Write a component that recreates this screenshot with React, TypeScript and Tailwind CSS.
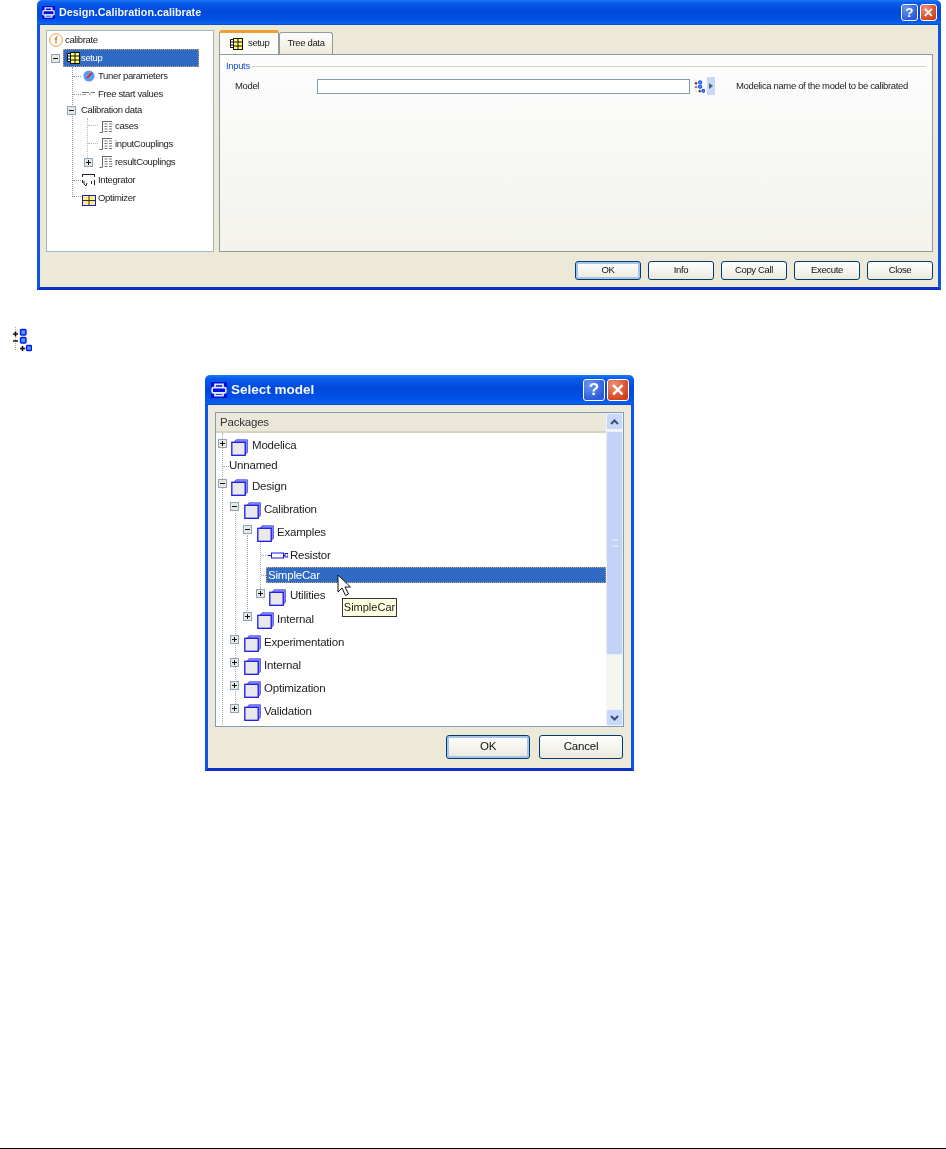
import type { ReactNode } from "react";

const FONT = "[font-family:'Liberation_Sans',Arial,sans-serif]";
const SMALL_TEXT = "text-[9.5px] tracking-[-0.35px]";
const LIST_TEXT = "text-[11.5px] tracking-[-0.2px]";

function ExpandBox({ open, className = "" }: { open?: boolean; className?: string }) {
  return (
    <svg width="9" height="9" viewBox="0 0 9 9" className={`shrink-0 ${className}`}>
      <rect x="0.5" y="0.5" width="8" height="8" fill="#e8e8e0" stroke="#8fa4b8" />
      <rect x="2" y="4" width="5" height="1" fill="#111" />
      {!open && <rect x="4" y="2" width="1" height="5" fill="#111" />}
    </svg>
  );
}

function FuncIcon() {
  return (
    <svg width="14" height="14" viewBox="0 0 14 14" className="shrink-0">
      <circle cx="7" cy="7" r="6.3" fill="#fff" stroke="#f09a3c" />
      <path d="M8.6 3.6C7.4 3.2 7 4 7 5v5.5M5.4 6h3" fill="none" stroke="#c46a10" strokeWidth="1" />
    </svg>
  );
}

function TableIcon() {
  return (
    <svg width="13" height="14" viewBox="0 0 13 14" className="shrink-0">
      <path d="M3.5 2.5H.5v8h3M.5 5h3M.5 8h3" fill="#fff" stroke="#111" strokeWidth="1" />
      <rect x="3.5" y="1.5" width="9" height="11" fill="#ffff70" stroke="#111" />
      <path d="M8 1.5v11M3.5 5h9M3.5 9h9" stroke="#111" strokeWidth="1" />
    </svg>
  );
}

function TunerIcon() {
  return (
    <svg width="12" height="12" viewBox="0 0 12 12" className="shrink-0">
      <circle cx="6" cy="6" r="5.6" fill="#5f9be8" />
      <path d="M4 8 9 3" stroke="#e01818" strokeWidth="1.6" />
    </svg>
  );
}

function FreeStartIcon() {
  return (
    <svg width="13" height="6" viewBox="0 0 13 6" className="shrink-0">
      <path d="M0 1.5h7M9 1.5h4" stroke="#777" strokeWidth="1" />
      <path d="M0 3.5h4M7 3.5h1V1.5" fill="none" stroke="#999" strokeWidth="1" />
    </svg>
  );
}

function CouplingIcon() {
  return (
    <svg width="13" height="14" viewBox="0 0 13 14" className="shrink-0">
      <path d="M3.5 1v11M.5 12.5h3M3 1.5h10" stroke="#666" strokeWidth="1" fill="none" />
      <path d="M5.5 4h3M10 4h3M5.5 6.5h3M10 6.5h3M5.5 9h3M10 9h3M5.5 11.5h3M10 11.5h3" stroke="#777" strokeWidth="1" />
    </svg>
  );
}

function IntegratorIcon() {
  return (
    <svg width="13" height="14" viewBox="0 0 13 14" className="shrink-0">
      <path d="M0 1.5h13M.5 1v3M12.5 1v3" stroke="#222" strokeWidth="1" fill="none" />
      <path d="M.5 7v3M12.5 7v5M2 8v3l2 2 1-3" stroke="#222" strokeWidth="1" fill="none" />
      <path d="M9.5 8v3" stroke="#222" strokeWidth="1" />
    </svg>
  );
}

function OptimizerIcon() {
  return (
    <svg width="14" height="11" viewBox="0 0 14 11" className="mt-[4px] shrink-0">
      <rect x="0.5" y="0.5" width="13" height="10" fill="#ffef80" stroke="#1a1ad0" />
      <path d="M.5 5.5h13M7 .5v10" stroke="#333" strokeWidth="1" />
    </svg>
  );
}

function PackageIcon() {
  return (
    <svg width="17" height="17" viewBox="0 0 17 17" className="mt-[4px] shrink-0">
      <path d="M3 3.5 5 .8h11.4v12.6L14 16" fill="#8f8ff5" stroke="#5a5af0" strokeWidth="1" />
      <rect x="0.8" y="3.3" width="13.4" height="13" fill="#e9e9e9" stroke="#1818f0" strokeWidth="1.3" />
    </svg>
  );
}

function ResistorIcon() {
  return (
    <svg width="20" height="7" viewBox="0 0 20 7" className="shrink-0">
      <path d="M0 3.5h3M16 3.5h1" stroke="#1818e0" strokeWidth="1" />
      <rect x="3.5" y="1" width="12" height="5" fill="#fff" stroke="#1818e0" />
      <rect x="17" y="1.5" width="3" height="3.5" fill="#fff" stroke="#1818e0" />
    </svg>
  );
}

function ParamSelectIcon({ className = "" }: { className?: string }) {
  return (
    <svg viewBox="0 0 20 26" className={`shrink-0 ${className}`}>
      <path d="M3.5 1v24" stroke="#b8b070" strokeWidth="1" strokeDasharray="1 1" />
      <path d="M1 8h5M3.5 5.5v5M1 15h5M8 22.5h5M10.5 20v5" stroke="#111" strokeWidth="1.6" />
      <rect x="8.5" y="3.5" width="5.5" height="5.5" rx="1" fill="#38a0ff" stroke="#1010f0" strokeWidth="1.4" />
      <rect x="8.5" y="11.5" width="5.5" height="5.5" rx="1" fill="#38a0ff" stroke="#1010f0" strokeWidth="1.4" />
      <rect x="14.5" y="19.5" width="5" height="5" rx="1" fill="#38a0ff" stroke="#1010f0" strokeWidth="1.4" />
    </svg>
  );
}

function TitleGlyph({ size }: { size: "sm" | "lg" }) {
  return (
    <span className={`flex shrink-0 items-center justify-center bg-[#0010e0] ${size === "sm" ? "h-[13px] w-[13px]" : "h-[16px] w-[16px]"}`}>
      <svg viewBox="0 0 14 14" className={size === "sm" ? "h-[13px] w-[13px]" : "h-[16px] w-[16px]"}>
        <path d="M3.5 5V2h7v3M3.5 9.5h7V12h-7z" fill="none" stroke="#dfe8ff" strokeWidth="1.5" />
        <rect x="1" y="5" width="12" height="4.5" rx="1" fill="none" stroke="#dfe8ff" strokeWidth="1.5" />
      </svg>
    </span>
  );
}

function HelpButton({ className }: { className: string }) {
  return (
    <span className={`flex items-center justify-center rounded-[3px] border border-white bg-[radial-gradient(circle_at_30%_25%,#6d97ee,#2a5ad8_75%)] font-bold text-white ${className}`}>
      ?
    </span>
  );
}

function CloseButton({ className }: { className: string }) {
  return (
    <span className={`flex items-center justify-center rounded-[3px] border border-white bg-[radial-gradient(circle_at_30%_25%,#ee9274,#d1431c_75%)] ${className}`}>
      <svg viewBox="0 0 10 10" className="h-[58%] w-[58%]">
        <path d="M1 1l8 8M9 1l-8 8" stroke="#fff" strokeWidth="2" />
      </svg>
    </span>
  );
}

function XpButton({ label, wide, isDefault }: { label: string; wide?: boolean; isDefault?: boolean }) {
  return (
    <button
      className={`flex items-center justify-center rounded-[3px] border border-[#003c74] bg-gradient-to-b from-white to-[#ebe9dd] text-[#111] ${
        wide ? `h-[24px] w-[84px] ${LIST_TEXT}` : `h-[19px] w-[66px] ${SMALL_TEXT}`
      } ${isDefault ? "shadow-[inset_0_0_0_2px_#a6c4ec]" : ""}`}
    >
      {label}
    </button>
  );
}

function Selected({ className, children }: { className: string; children: ReactNode }) {
  return (
    <div className={`flex items-center border border-dotted border-[#c8a860] bg-[#316ac5] text-white ${className}`}>
      {children}
    </div>
  );
}

function CalibrateTree() {
  return (
    <div className={`relative h-full w-[168px] shrink-0 border border-[#a8b6c4] bg-white text-[#222] ${SMALL_TEXT}`}>
      {/* tree guide lines */}
      <div className="absolute left-[25px] top-[36px] h-[130px] border-l border-dotted border-[#999]" />
      <div className="absolute left-[40px] top-[87px] h-[40px] border-l border-dotted border-[#bbb]" />
      <div className="absolute left-[26px] top-[45px] w-[8px] border-t border-dotted border-[#999]" />
      <div className="absolute left-[26px] top-[63px] w-[8px] border-t border-dotted border-[#999]" />
      <div className="absolute left-[26px] top-[149px] w-[8px] border-t border-dotted border-[#999]" />
      <div className="absolute left-[26px] top-[165px] w-[8px] border-t border-dotted border-[#999]" />
      <div className="absolute left-[41px] top-[94px] w-[10px] border-t border-dotted border-[#bbb]" />
      <div className="absolute left-[41px] top-[112px] w-[10px] border-t border-dotted border-[#bbb]" />

      <div className="relative flex flex-col">
        <div className="flex h-[18px] items-center gap-[2px] pl-[2px]"><FuncIcon />calibrate</div>
        <div className="flex h-[18px] items-center pl-[4px]">
          <ExpandBox open />
          <Selected className="ml-[3px] h-[18px] w-[136px] gap-[1px] pl-[3px]"><TableIcon />setup</Selected>
        </div>
        <div className="flex h-[18px] items-center gap-[3px] pl-[36px]"><TunerIcon />Tuner parameters</div>
        <div className="flex h-[18px] items-center gap-[3px] pl-[35px]"><FreeStartIcon />Free start values</div>
        <div className="flex h-[15px] items-center gap-[5px] pl-[20px]"><ExpandBox open />Calibration data</div>
        <div className="flex h-[17px] items-center gap-[3px] pl-[52px]"><CouplingIcon />cases</div>
        <div className="flex h-[18px] items-center gap-[3px] pl-[52px]"><CouplingIcon />inputCouplings</div>
        <div className="flex h-[18px] items-center pl-[37px]">
          <ExpandBox />
          <span className="ml-[6px]"><CouplingIcon /></span>
          <span className="ml-[3px]">resultCouplings</span>
        </div>
        <div className="flex h-[18px] items-center gap-[3px] pl-[35px]"><IntegratorIcon />Integrator</div>
        <div className="flex h-[18px] items-center gap-[2px] pl-[35px]"><OptimizerIcon />Optimizer</div>
      </div>
    </div>
  );
}

function SetupPanel() {
  return (
    <div className={`flex min-w-0 flex-1 flex-col text-[#222] ${SMALL_TEXT}`}>
      <div className="flex h-[24px] items-end">
        <div className="flex h-[24px] w-[60px] items-center gap-[5px] rounded-t-[3px] border-x border-t-[3px] border-x-[#919b9c] border-t-[#f0a030] bg-[#fbfbf8] pl-[10px]">
          <TableIcon />setup
        </div>
        <div className="flex h-[22px] w-[54px] items-center justify-center rounded-t-[3px] border-x border-t border-[#919b9c] bg-gradient-to-b from-white to-[#ece9d8]">
          Tree data
        </div>
      </div>
      <div className="flex-1 border border-[#919b9c] bg-gradient-to-b from-[#fdfdfe] to-[#f3f2ec] px-[6px]">
        <div className="mt-[4px] flex items-center gap-[2px]">
          <span className="text-[#1a4fc4]">Inputs</span>
          <div className="h-px flex-1 bg-[#d6d2c2]" />
        </div>
        <div className="mt-[4px] flex h-[18px] items-center">
          <span className="ml-[9px] w-[82px] shrink-0">Model</span>
          <div className="h-[15px] w-[373px] shrink-0 border border-[#7f9db9] bg-white" />
          <ParamSelectIcon className="ml-[4px] h-[14px] w-[11px]" />
          <span className="ml-[2px] flex h-[18px] w-[8px] shrink-0 items-center justify-center bg-[#c8d8f8]">
            <svg width="4" height="6" viewBox="0 0 4 6"><path d="M0 0l4 3-4 3z" fill="#4d6185" /></svg>
          </span>
          <span className="ml-[21px] whitespace-nowrap">Modelica name of the model to be calibrated</span>
        </div>
      </div>
    </div>
  );
}

const DEPTHS = {
  0: { row: "pl-[2px]", box: "ml-[4px]", text: "ml-[4px]" },
  1: { row: "pl-[14px]", box: "ml-[5px]", text: "ml-[3px]" },
  2: { row: "pl-[27px]", box: "ml-[5px]", text: "ml-[3px]" },
  3: { row: "pl-[40px]", box: "ml-[4px]", text: "ml-[4px]" },
};

function PackageRow({ label, depth, open, height }: { label: string; depth: 0 | 1 | 2 | 3; open?: boolean; height: string }) {
  const d = DEPTHS[depth];
  return (
    <div className={`flex items-center ${height} ${d.row}`}>
      <ExpandBox open={open} className="-mt-[4px]" />
      <span className={`flex ${d.box}`}><PackageIcon /></span>
      <span className={`mt-[2px] ${d.text}`}>{label}</span>
    </div>
  );
}

function SelectModelList() {
  return (
    <div className="flex h-[315px] border border-[#7f9db9] bg-white">
      <div className="flex min-w-0 flex-1 flex-col">
        <div className={`flex h-[20px] shrink-0 items-center border-b-2 border-[#d6d2c2] bg-[#ebe8da] pl-[4px] pt-[2px] text-[#333] ${LIST_TEXT}`}>
          Packages
        </div>
        <div className={`relative flex-1 pt-px text-[#222] ${LIST_TEXT}`}>
          {/* tree guide lines */}
          <div className="absolute left-[6px] top-0 h-[292px] border-l border-dotted border-[#aaa]" />
          <div className="absolute left-[19px] top-[80px] h-[195px] border-l border-dotted border-[#aaa]" />
          <div className="absolute left-[31px] top-[102px] h-[78px] border-l border-dotted border-[#aaa]" />
          <div className="absolute left-[44px] top-[108px] h-[50px] border-l border-dotted border-[#aaa]" />
          <div className="absolute left-[7px] top-[33px] w-[6px] border-t border-dotted border-[#aaa]" />
          <div className="absolute left-[45px] top-[122px] w-[7px] border-t border-dotted border-[#aaa]" />
          <div className="absolute left-[45px] top-[142px] w-[5px] border-t border-dotted border-[#aaa]" />

          <div className="relative flex flex-col">
            <PackageRow label="Modelica" depth={0} height="h-[22px]" />
            <div className="flex h-[18px] items-center pl-[13px] pt-[2px]">Unnamed</div>
            <PackageRow label="Design" depth={0} open height="h-[23px]" />
            <PackageRow label="Calibration" depth={1} open height="h-[23px]" />
            <PackageRow label="Examples" depth={2} open height="h-[23px]" />
            <div className="flex h-[24px] items-center gap-[2px] pl-[52px]"><ResistorIcon /><span className="mt-[2px]">Resistor</span></div>
            <Selected className="ml-[50px] h-[16px] pl-px pt-[2px]">SimpleCar</Selected>
            <PackageRow label="Utilities" depth={3} height="h-[24px]" />
            <PackageRow label="Internal" depth={2} height="h-[23px]" />
            <PackageRow label="Experimentation" depth={1} height="h-[23px]" />
            <PackageRow label="Internal" depth={1} height="h-[23px]" />
            <PackageRow label="Optimization" depth={1} height="h-[23px]" />
            <PackageRow label="Validation" depth={1} height="h-[23px]" />
          </div>
        </div>
      </div>
      <div className="flex w-[17px] shrink-0 flex-col bg-[#f6f6f0]">
        <ScrollArrow dir="up" />
        <div className="mt-px flex h-[224px] items-center justify-center rounded-[2px] border border-[#e8eefc] bg-[#c3d3f8]">
          <span className="h-[8px] w-[6px] border-y-2 border-[#d8e2fa]" />
        </div>
        <div className="flex-1" />
        <ScrollArrow dir="down" />
      </div>
    </div>
  );
}

function ScrollArrow({ dir }: { dir: "up" | "down" }) {
  return (
    <span className="flex h-[17px] shrink-0 items-center justify-center rounded-[2px] border border-[#eef2fd] bg-[#c9d8fa]">
      <svg width="9" height="6" viewBox="0 0 9 6">
        <path d={dir === "up" ? "M1 5l3.5-3.5L8 5" : "M1 1l3.5 3.5L8 1"} fill="none" stroke="#3a4d78" strokeWidth="2" />
      </svg>
    </span>
  );
}

const TITLE_BAR =
  "bg-[linear-gradient(180deg,#1c78f4_0%,#0a5cec_12%,#0048dc_45%,#0052e6_80%,#0a62f0_94%,#0845d0_100%)]";
const FRAME = "border-x-[3px] border-b-[3px] border-x-[#0d55e8] border-b-[#0a30c8] bg-[#ece9d8]";

export default function App() {
  return (
    <div className={`flex h-[1149px] w-[946px] flex-col overflow-hidden bg-white ${FONT}`}>
      {/* Design.Calibration.calibrate window */}
      <div className="ml-[37px] flex h-[290px] w-[904px] shrink-0 flex-col blur-[0.3px]">
        <div className={`flex h-[25px] shrink-0 items-center rounded-t-[5px] pl-[5px] pr-[4px] ${TITLE_BAR}`}>
          <TitleGlyph size="sm" />
          <span className="ml-[4px] text-[10.75px] font-bold text-[#f4f7ff]">Design.Calibration.calibrate</span>
          <HelpButton className="ml-auto h-[17px] w-[17px] text-[13px]" />
          <CloseButton className="ml-[2px] h-[17px] w-[17px]" />
        </div>
        <div className={`flex flex-1 flex-col pl-[6px] pr-[5px] pt-[5px] ${FRAME}`}>
          <div className="flex h-[222px] gap-[5px]">
            <CalibrateTree />
            <SetupPanel />
          </div>
          <div className="mt-[9px] flex justify-end gap-[7px]">
            <XpButton label="OK" isDefault />
            <XpButton label="Info" />
            <XpButton label="Copy Call" />
            <XpButton label="Execute" />
            <XpButton label="Close" />
          </div>
        </div>
      </div>

      <ParamSelectIcon className="ml-[12px] mt-[36px] h-[26px] w-[20px]" />

      {/* Select model dialog */}
      <div className="relative ml-[205px] mt-[23px] flex h-[396px] w-[429px] shrink-0 flex-col blur-[0.3px]">
        <div className={`flex h-[30px] shrink-0 items-center rounded-t-[5px] pl-[6px] pr-[5px] ${TITLE_BAR}`}>
          <TitleGlyph size="lg" />
          <span className="ml-[4px] text-[13.5px] font-bold text-[#f4f7ff]">Select model</span>
          <HelpButton className="ml-auto h-[22px] w-[22px] text-[17px]" />
          <CloseButton className="ml-[2px] h-[22px] w-[22px]" />
        </div>
        <div className={`flex flex-1 flex-col px-[7px] pt-[7px] ${FRAME}`}>
          <SelectModelList />
          <div className="mr-[1px] mt-[8px] flex justify-end gap-[9px]">
            <XpButton label="OK" wide isDefault />
            <XpButton label="Cancel" wide />
          </div>
        </div>
        {/* cursor and tooltip over the list */}
        <svg width="14" height="23" viewBox="0 0 14 23" className="absolute left-[132px] top-[199px]">
          <path d="M1 1v17l4-4 3.5 7.5 3-1.5L8 13h5.5z" fill="#fff" stroke="#111" strokeWidth="1" />
        </svg>
        <div className="absolute left-[137px] top-[223px] flex h-[19px] w-[55px] items-center justify-center border border-[#333] bg-[#ffffe1] text-[11px] text-[#222]">
          SimpleCar
        </div>
      </div>

      <div className="mt-auto h-px w-full bg-black" />
    </div>
  );
}
